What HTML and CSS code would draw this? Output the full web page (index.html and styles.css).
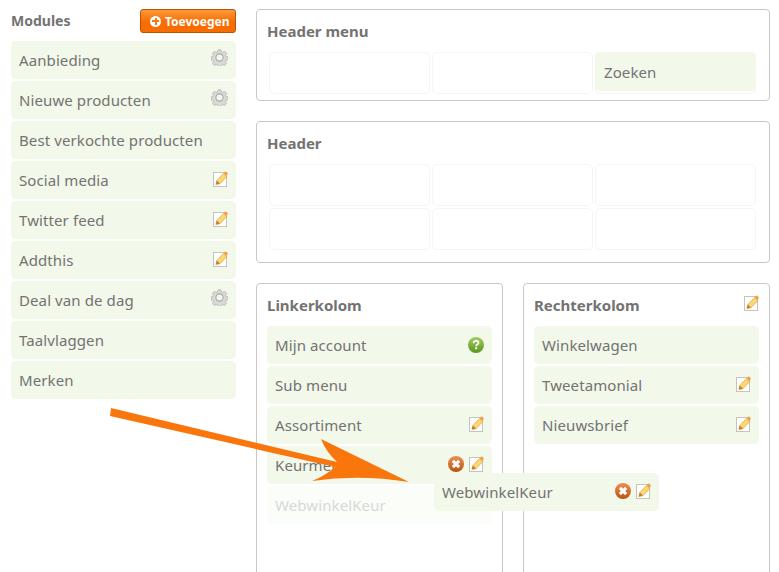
FILE: index.html
```html
<!DOCTYPE html>
<html lang="en">
<head>
    <meta charset="UTF-8">
    <meta name="viewport" content="width=device-width, initial-scale=1.0">
    <title>Modules</title>
    <link rel="stylesheet" href="styles.css">
</head>
<body>

    <svg class="icon-defs" width="0" height="0">
        <defs>
            <linearGradient id="cross-fill" x1="0" y1="0" x2="0" y2="1">
                <stop offset="0" stop-color="#ee8f52"/>
                <stop offset="1" stop-color="#b8540f"/>
            </linearGradient>
            <linearGradient id="help-fill" x1="0" y1="0" x2="0" y2="1">
                <stop offset="0" stop-color="#a3cd62"/>
                <stop offset="1" stop-color="#5a9420"/>
            </linearGradient>
            <symbol id="gear" viewBox="0 0 17 17">
                <path d="M7 .8h3l.4 2 1.300.6 1.800-1.100 2.100 2.100-1.100 1.800.6 1.300 2 .4v3l-2 .4-.6 1.300 1.100 1.800-2.100 2.100-1.800-1.100-1.300.6-.4 2h-3l-.4-2-1.300-.6-1.800 1.100-2.100-2.100 1.100-1.800-.6-1.300-2-.4v-3l2-.4.6-1.300-1.100-1.800 2.100-2.100 1.800 1.100 1.300-.6z" fill="#d9d9d6" stroke="#b4b4b2" stroke-width=".8"/>
                <circle cx="8.500" cy="8.500" r="3.600" fill="#f4f7ee" stroke="#a8a8a8" stroke-width="1.100"/>
            </symbol>
            <symbol id="pencil" viewBox="0 0 15 16">
                <rect x=".5" y="1.500" width="13" height="14" fill="#fff" stroke="#c4c4bc"/>
                <path d="M2.800 13.600l1-4 6.600-7 3.300 3.100-6.700 7z" fill="#fbd873" stroke="#e3a33a" stroke-width=".7"/>
                <path d="M10.600 2.400l1.300-1.400c.5-.5 1.100-.5 1.600-.1l1 1c.5.500.5 1.100 0 1.600l-1.300 1.500z" fill="#f0a14a"/>
                <path d="M2.800 13.600l1-4 3.200 3z" fill="#b57f48"/>
            </symbol>
            <symbol id="cross" viewBox="0 0 16 16">
                <circle cx="8" cy="8" r="8" fill="url(#cross-fill)"/>
                <path d="M4.900 4.900l6.200 6.200M11.100 4.900l-6.200 6.200" stroke="#fff" stroke-width="3" fill="none"/>
            </symbol>
            <symbol id="help" viewBox="0 0 16 16">
                <circle cx="8" cy="8" r="8" fill="url(#help-fill)"/>
                <path d="M5.600 6.200c0-1.500 1-2.300 2.500-2.300s2.400.8 2.400 2c0 1.700-2.300 1.700-2.300 3.300" stroke="#fff" stroke-width="1.800" fill="none"/>
                <rect x="7.200" y="10.300" width="1.900" height="1.900" fill="#fff"/>
            </symbol>
        </defs>
    </svg>

    <div class="page">
        <div class="modules">
            <div class="modules-head">
                <h2>Modules</h2>
                <button class="add-btn"><span class="add-plus"></span>Toevoegen</button>
            </div>
            <div class="item-list">
                <div class="item">Aanbieding <svg class="icon gear"><use href="#gear"/></svg></div>
                <div class="item">Nieuwe producten <svg class="icon gear"><use href="#gear"/></svg></div>
                <div class="item">Best verkochte producten</div>
                <div class="item">Social media <svg class="icon"><use href="#pencil"/></svg></div>
                <div class="item">Twitter feed <svg class="icon"><use href="#pencil"/></svg></div>
                <div class="item">Addthis <svg class="icon"><use href="#pencil"/></svg></div>
                <div class="item">Deal van de dag <svg class="icon gear"><use href="#gear"/></svg></div>
                <div class="item">Taalvlaggen</div>
                <div class="item">Merken</div>
            </div>
        </div>

        <div class="layout">
            <div class="panel panel-wide">
                <h3>Header menu</h3>
                <div class="cells">
                    <div class="cell"></div>
                    <div class="cell"></div>
                    <div class="cell"><div class="item cell-item">Zoeken</div></div>
                </div>
            </div>

            <div class="panel panel-wide panel-header">
                <h3>Header</h3>
                <div class="cells">
                    <div class="cell"></div>
                    <div class="cell"></div>
                    <div class="cell"></div>
                    <div class="cell"></div>
                    <div class="cell"></div>
                    <div class="cell"></div>
                </div>
            </div>

            <div class="columns">
                <div class="panel column">
                    <h3>Linkerkolom</h3>
                    <div class="item-list">
                        <div class="item">Mijn account <svg class="icon help"><use href="#help"/></svg></div>
                        <div class="item">Sub menu</div>
                        <div class="item">Assortiment <svg class="icon"><use href="#pencil"/></svg></div>
                        <div class="item">Keurmerk
                            <span class="icon-group">
                                <svg class="icon icon-round"><use href="#cross"/></svg>
                                <svg class="icon"><use href="#pencil"/></svg>
                            </span>
                        </div>
                        <div class="item item-ghost">WebwinkelKeur</div>
                    </div>
                </div>
                <div class="panel column">
                    <h3>Rechterkolom <svg class="icon"><use href="#pencil"/></svg></h3>
                    <div class="item-list">
                        <div class="item">Winkelwagen</div>
                        <div class="item">Tweetamonial <svg class="icon"><use href="#pencil"/></svg></div>
                        <div class="item">Nieuwsbrief <svg class="icon"><use href="#pencil"/></svg></div>
                    </div>
                </div>
            </div>
        </div>
    </div>

    <!-- item being dragged + the arrow drawn over the screenshot -->
    <div class="item item-dragged">WebwinkelKeur
        <span class="icon-group">
            <svg class="icon icon-round"><use href="#cross"/></svg>
            <svg class="icon"><use href="#pencil"/></svg>
        </span>
    </div>
    <svg class="arrow" width="779" height="572" viewBox="0 0 779 572">
        <path d="M111 408l-1 8 225 51q-10 9-23 14 48-7 97 1l-88-43q5 13 16 23z" fill="#f9760d"/>
    </svg>

</body>
</html>
```

FILE: styles.css
```css
html, body {
    height: 100%;
}
body {
    margin: 0;
    background-color: #fff;
    font-family: "Noto Sans", sans-serif;
    font-size: 15px;
    letter-spacing: 0.1px;
    color: #737373;
    overflow: hidden;
    position: relative;
}
.icon-defs {
    position: absolute;
}
.page {
    display: flex;
    gap: 20px;
    padding: 9px 9px 0 11px;
}
.modules {
    width: 225px;
    flex: none;
}
.modules-head {
    display: flex;
    justify-content: space-between;
    align-items: center;
    height: 24px;
    margin-bottom: 8px;
}
.modules-head h2 {
    margin: 0 0 2px;
    font-size: 14px;
    font-weight: 700;
    letter-spacing: 0;
}
.add-btn {
    display: flex;
    align-items: center;
    gap: 4px;
    width: 96px;
    height: 24px;
    padding: 0 0 0 9px;
    background: linear-gradient(#fb9a3c, #f86c00 55%);
    border: 1px solid #b85300;
    border-radius: 3px;
    color: #fff;
    font-family: inherit;
    font-size: 12px;
    font-weight: 700;
    letter-spacing: 0;
    white-space: nowrap;
}
.add-plus {
    width: 11px;
    height: 11px;
    flex: none;
    border-radius: 50%;
    background:
        linear-gradient(#f47a10, #f47a10) center / 7px 2px no-repeat,
        linear-gradient(#f47a10, #f47a10) center / 2px 7px no-repeat,
        #fff;
}
.item-list {
    display: flex;
    flex-direction: column;
    gap: 2px;
}
.item {
    display: flex;
    justify-content: space-between;
    align-items: center;
    box-sizing: border-box;
    height: 38px;
    padding: 0 8px;
    background-color: #f2f8ea;
    border-radius: 5px;
}
.icon {
    width: 15px;
    height: 16px;
    margin-bottom: 3px;
    flex: none;
}
.icon.gear {
    width: 17px;
    height: 17px;
    margin-bottom: 5px;
}
.icon.help {
    width: 16px;
    height: 16px;
    margin-bottom: 0;
}
.icon-round {
    width: 16px;
}
.icon-group {
    display: flex;
    gap: 5px;
}
.item-ghost {
    background-color: #fbfdf8;
    color: #d8d8d8;
}
.item-dragged {
    position: absolute;
    left: 434px;
    top: 473px;
    width: 225px;
}
.layout {
    flex: 1;
    display: flex;
    flex-direction: column;
    gap: 20px;
}
.panel {
    box-sizing: border-box;
    padding: 11px 10px 0;
    background-color: #fff;
    border: 1px solid #c8c8c8;
    border-radius: 4px;
}
.panel h3 {
    display: flex;
    justify-content: space-between;
    align-items: center;
    height: 20px;
    margin: 0;
    font-size: 15px;
    font-weight: 700;
    letter-spacing: 0;
}
.panel-wide {
    padding-bottom: 6px;
}
.panel-wide h3 {
    margin-bottom: 11px;
}
.panel-header {
    padding-bottom: 12px;
}
.cells {
    display: grid;
    grid-template-columns: repeat(3, 161px);
    gap: 2px;
    margin-left: 2px;
}
.cell {
    box-sizing: border-box;
    height: 42px;
    border: 1px solid #f5f5f5;
    border-radius: 5px;
}
.cell-item {
    height: 39px;
    margin: -1px -1px 0;
    padding: 0 9px;
}
.columns {
    display: flex;
    gap: 20px;
}
.column {
    flex: 1;
    height: 310px;
}
.column h3 {
    margin-bottom: 11px;
}
.column h3 .icon {
    margin-bottom: 4px;
}
.arrow {
    position: absolute;
    left: 0;
    top: 0;
    pointer-events: none;
}
```
